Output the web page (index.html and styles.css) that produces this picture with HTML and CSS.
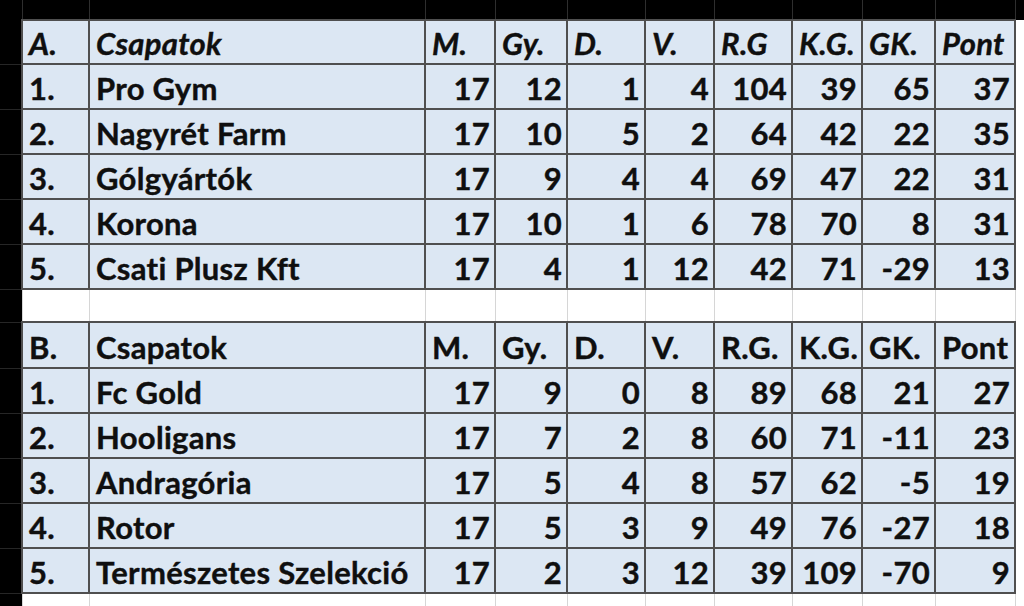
FILE: index.html
```html
<!DOCTYPE html>
<html lang="hu">
<head>
<meta charset="utf-8">
<title>Tabella</title>
<link rel="stylesheet" href="styles.css">
</head>
<body>
<table class="sheet">
  <colgroup>
    <col class="w-rh"><col class="w-no"><col class="w-team"><col class="w-m"><col class="w-gy"><col class="w-d"><col class="w-v"><col class="w-rg"><col class="w-kg"><col class="w-gk"><col class="w-pt"><col class="w-fill">
  </colgroup>
  <tbody>
    <tr class="band"><td class="rh"></td><td></td><td></td><td></td><td></td><td></td><td></td><td></td><td></td><td></td><td></td><td class="fill"></td></tr>

    <tr class="row head italic first"><td class="rh"></td><td>A.</td><td>Csapatok</td><td>M.</td><td>Gy.</td><td>D.</td><td>V.</td><td>R.G</td><td>K.G.</td><td>GK.</td><td>Pont</td><td class="fill"></td></tr>
    <tr class="row"><td class="rh"></td><td>1.</td><td>Pro Gym</td><td class="n">17</td><td class="n">12</td><td class="n">1</td><td class="n">4</td><td class="n">104</td><td class="n">39</td><td class="n">65</td><td class="n">37</td><td class="fill"></td></tr>
    <tr class="row"><td class="rh"></td><td>2.</td><td>Nagyrét Farm</td><td class="n">17</td><td class="n">10</td><td class="n">5</td><td class="n">2</td><td class="n">64</td><td class="n">42</td><td class="n">22</td><td class="n">35</td><td class="fill"></td></tr>
    <tr class="row"><td class="rh"></td><td>3.</td><td>Gólgyártók</td><td class="n">17</td><td class="n">9</td><td class="n">4</td><td class="n">4</td><td class="n">69</td><td class="n">47</td><td class="n">22</td><td class="n">31</td><td class="fill"></td></tr>
    <tr class="row"><td class="rh"></td><td>4.</td><td>Korona</td><td class="n">17</td><td class="n">10</td><td class="n">1</td><td class="n">6</td><td class="n">78</td><td class="n">70</td><td class="n">8</td><td class="n">31</td><td class="fill"></td></tr>
    <tr class="row"><td class="rh"></td><td>5.</td><td>Csati Plusz Kft</td><td class="n">17</td><td class="n">4</td><td class="n">1</td><td class="n">12</td><td class="n">42</td><td class="n">71</td><td class="n">-29</td><td class="n">13</td><td class="fill"></td></tr>

    <tr class="blank"><td class="rh"></td><td></td><td></td><td></td><td></td><td></td><td></td><td></td><td></td><td></td><td></td><td class="fill"></td></tr>

    <tr class="row head second"><td class="rh"></td><td>B.</td><td>Csapatok</td><td>M.</td><td>Gy.</td><td>D.</td><td>V.</td><td>R.G.</td><td>K.G.</td><td>GK.</td><td>Pont</td><td class="fill"></td></tr>
    <tr class="row"><td class="rh"></td><td>1.</td><td>Fc Gold</td><td class="n">17</td><td class="n">9</td><td class="n">0</td><td class="n">8</td><td class="n">89</td><td class="n">68</td><td class="n">21</td><td class="n">27</td><td class="fill"></td></tr>
    <tr class="row"><td class="rh"></td><td>2.</td><td>Hooligans</td><td class="n">17</td><td class="n">7</td><td class="n">2</td><td class="n">8</td><td class="n">60</td><td class="n">71</td><td class="n">-11</td><td class="n">23</td><td class="fill"></td></tr>
    <tr class="row"><td class="rh"></td><td>3.</td><td>Andragória</td><td class="n">17</td><td class="n">5</td><td class="n">4</td><td class="n">8</td><td class="n">57</td><td class="n">62</td><td class="n">-5</td><td class="n">19</td><td class="fill"></td></tr>
    <tr class="row"><td class="rh"></td><td>4.</td><td>Rotor</td><td class="n">17</td><td class="n">5</td><td class="n">3</td><td class="n">9</td><td class="n">49</td><td class="n">76</td><td class="n">-27</td><td class="n">18</td><td class="fill"></td></tr>
    <tr class="row"><td class="rh"></td><td>5.</td><td>Természetes Szelekció</td><td class="n">17</td><td class="n">2</td><td class="n">3</td><td class="n">12</td><td class="n">39</td><td class="n">109</td><td class="n">-70</td><td class="n">9</td><td class="fill"></td></tr>

    <tr class="tail"><td class="rh"></td><td></td><td></td><td></td><td></td><td></td><td></td><td></td><td></td><td></td><td></td><td class="fill"></td></tr>
  </tbody>
</table>
</body>
</html>
```

FILE: styles.css
```css
html, body {
  margin: 0;
  padding: 0;
  background: #000;
  overflow: hidden;
}

.sheet {
  width: 1024px;
  table-layout: fixed;
  border-collapse: collapse;
  border-spacing: 0;
  font-family: "Lato", "Liberation Sans", sans-serif;
  font-weight: 700;
  font-size: 31px;
  letter-spacing: 0.3px;
  color: #0f0f0f;
  -webkit-text-stroke: 0.4px #0f0f0f;
}

.w-rh { width: 22px; }
.w-no { width: 67px; }
.w-team { width: 336px; }
.w-m { width: 70px; }
.w-gy { width: 72px; }
.w-d { width: 78px; }
.w-v { width: 69px; }
.w-rg { width: 78px; }
.w-kg { width: 70px; }
.w-gk { width: 73px; }
.w-pt { width: 80px; }
.w-fill { width: 9px; }

.sheet td {
  padding: 0;
  white-space: nowrap;
  overflow: hidden;
}

/* top column-header band */
.band { height: 20px; }
.band td {
  background: #000;
  border-left: 1px solid #2e2e2e;
  border-right: 1px solid #2e2e2e;
}

/* data rows */
.row { height: 45px; }
.row.first { height: 44px; }
.row.second { height: 46px; }

.row td {
  background: #dce7f3;
  border: 2px solid #4f4f4f;
  vertical-align: bottom;
  padding: 0 4px 3px 6px;
  line-height: 34px;
}
.row td.n {
  text-align: right;
  padding-right: 4px;
}
.row.italic td { font-style: italic; }

/* empty separating row */
.blank { height: 33px; }
.blank td {
  background: #fff;
  border-left: 1px solid #d6d6d6;
  border-right: 1px solid #d6d6d6;
}

/* area under the tables */
.tail { height: 13px; }
.tail td {
  background: #fff;
  border-left: 1px solid #d6d6d6;
  border-right: 1px solid #d6d6d6;
}

.sheet td.fill {
  background: #fff;
  border: none;
}
.band td.fill { background: #000; }

/* left row-header column */
.band td.rh { border: none; }
.row td.rh, .blank td.rh, .tail td.rh {
  background: #000;
  border-right: none;
  border-top: none;
  border-left: none;
  border-bottom: 1px solid #262626;
  padding: 0;
}
```
